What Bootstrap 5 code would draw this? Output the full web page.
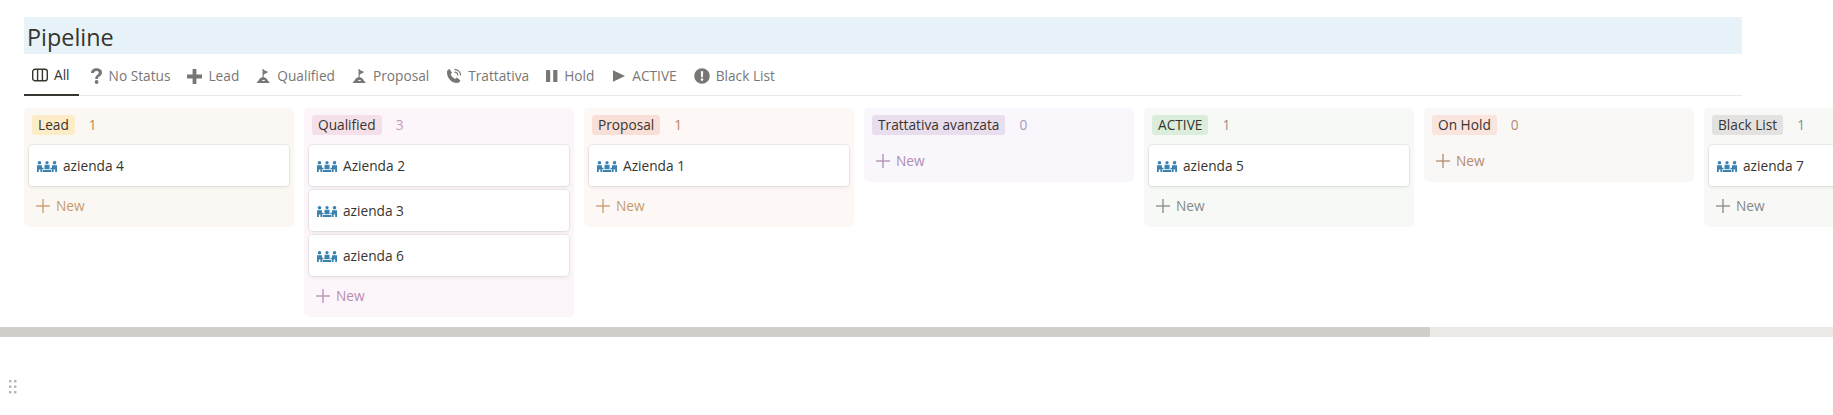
<!DOCTYPE html>
<html lang="en">

<head>
    <meta charset="UTF-8">
    <meta name="viewport" content="width=device-width, initial-scale=1.0">
    <title>Pipeline</title>
    <link href="https://cdn.jsdelivr.net/npm/bootstrap@5.3.0/dist/css/bootstrap.min.css" rel="stylesheet">
    <style>
        html, body { height: 415px; overflow: hidden; background: #fff; }
        body { font-family: "Open Sans", "Noto Sans", sans-serif; font-size: 13.7px; color: #37352f; }

        .page-wrap { padding: 17px 0 0 24px; width: 1742px; }
        .page-title { height: 37px; line-height: 37px; margin: 0; padding: 2px 0 0 3px; background: #e7f3f8; font-family: "Open Sans", sans-serif; font-size: 23.4px; font-weight: 500; color: #37352f; }

        .view-tabs { height: 42px; border-bottom: 1px solid #e9e9e7; gap: 1px; padding-top: 2px; }
        .view-tab { display: flex; align-items: center; gap: 6px; padding: 0 8px; height: 39px; margin-bottom: -1px; color: #787774; font-weight: 500; white-space: nowrap; text-decoration: none; }
        .view-tab svg { fill: #787774; flex: none; }
        .view-tab.is-active { color: #37352f; border-bottom: 2px solid #37352f; padding-right: 9px; margin-right: 2px; }
        .view-tab.is-active svg { fill: none; stroke: #37352f; }

        .board-area { overflow: hidden; padding: 12px 0 0 24px; height: 231px; gap: 10px; }
        .board-col { flex: 0 0 270px; border-radius: 5px; padding: 7px 5px 5px; }
        .col-head { height: 20px; margin: 0 0 10px 3px; display: flex; align-items: center; gap: 14px; }
        .col-pill { height: 20px; line-height: 20px; padding: 0 6px; border-radius: 3px; font-weight: 500; color: #37352f; white-space: nowrap; }
        .deal-card { height: 41px; margin-bottom: 4px; padding: 2px 8px 0; display: flex; align-items: center; gap: 6px; background: #fff; border-radius: 4px; box-shadow: 0 0 0 1px rgba(15,15,15,.06), 0 2px 4px rgba(15,15,15,.06); font-weight: 500; color: #37352f; }
        .deal-card svg { flex: none; fill: #3a82b0; }
        .col-new { height: 32px; padding-left: 7px; display: flex; align-items: center; gap: 6px; }
        .col-new svg { stroke: currentColor; stroke-width: 1.3; flex: none; }

        .scroll-track { height: 10px; background: #ebeae7; }
        .scroll-thumb { height: 10px; width: 1430px; background: #d0cfca; }

        .drag-grip { margin: 43px 0 0 9px; width: 8px; height: 14px; }
        .drag-grip svg { display: block; }

        .c-lead { background: #fbf8f3; } .c-lead .col-pill { background: #fdecc8; } .c-lead .col-num { color: #b98a5e; } .c-lead .col-new { color: #c69a6c; }
        .c-qual { background: #fcf6fa; } .c-qual .col-pill { background: #f5e0e9; } .c-qual .col-num { color: #c39abb; } .c-qual .col-new { color: #b98cb0; }
        .c-prop { background: #fdf8f5; } .c-prop .col-pill { background: #f9dfd7; } .c-prop .col-num { color: #b98a5e; } .c-prop .col-new { color: #c69a6c; }
        .c-trat { background: #f9f6fc; } .c-trat .col-pill { background: #e8deee; } .c-trat .col-num { color: #a99abf; } .c-trat .col-new { color: #b08cb4; }
        .c-act { background: #f7f9f6; } .c-act .col-pill { background: #dbeddb; } .c-act .col-num { color: #8f968f; } .c-act .col-new { color: #87898a; }
        .c-hold { background: #f9f8f7; } .c-hold .col-pill { background: #f9e4de; } .c-hold .col-num { color: #b48a70; } .c-hold .col-new { color: #b48a70; }
        .c-black { background: #f8f8f7; } .c-black .col-pill { background: #e3e2e0; } .c-black .col-num { color: #91918e; } .c-black .col-new { color: #87878a; }
    </style>
</head>

<body>

    <!-- shared icons -->
    <svg width="0" height="0" class="position-absolute">
        <defs>
            <symbol id="ic-people" viewBox="0 0 20 11">
                <circle cx="2.500" cy="1.800" r="1.800" />
                <circle cx="10" cy="1.600" r="1.600" />
                <circle cx="17.500" cy="1.800" r="1.800" />
                <path d="M0 4.200h5v2.600h1.600v1.400H5V11H3.400V8.400H1.800V11H0zM7.500 3.800h5v4.400h-5zM15 4.200H20V11h-1.800V8.400h-1.600V11H15V8.200h-1.600V6.800H15zM5.600 9h8.800v2H5.600z" />
            </symbol>
            <symbol id="ic-flag" viewBox="0 0 16 16">
                <path d="M7 0.500h1.200v1l5 2.300-5 2.600v2.800c2 .3 3 1 3.500 2.300l3 4H.6l3-4c.5-1.300 1.600-2 3.400-2.300zM6.200 12.200a1.800 1.200 0 0 0 3.600 0z" fill-rule="evenodd" />
            </symbol>
            <symbol id="ic-plus" viewBox="0 0 14 14">
                <path d="M0 7h14" fill="none" />
                <path d="M7 0v14" fill="none" />
            </symbol>
        </defs>
    </svg>

    <div class="page-wrap">
        <h1 class="page-title">Pipeline</h1>

        <nav class="view-tabs d-flex align-items-center">
            <a class="view-tab is-active" href="#">
                <svg width="16" height="14" viewBox="0 0 16 14" stroke-width="1.4"><rect x=".7" y="1.200" width="14.600" height="11.600" rx="2.400" /><path d="M5.600 1.200v11.600M10.400 1.200v11.600" /></svg>All
            </a>
            <a class="view-tab" href="#">
                <svg width="13" height="16" viewBox="0 0 13 16"><path d="M1 5c0-2.900 2.300-4.700 5.500-4.700 3.300 0 5.500 1.700 5.500 4.300 0 2-1.100 3-2.500 3.900-1.200.8-1.500 1.200-1.500 2.500H5.200c0-2.200.6-3.100 2-4.100 1-.7 1.500-1.200 1.500-2.100 0-1-.8-1.700-2.200-1.700S4.200 3.800 4.100 5z" /><circle cx="6.600" cy="14" r="1.900" /></svg>No Status
            </a>
            <a class="view-tab" href="#">
                <svg width="15" height="15" viewBox="0 0 15 15"><path d="M5.600 0h3.800v5.600H15v3.800H9.400V15H5.600V9.400H0V5.600h5.600z" /></svg>Lead
            </a>
            <a class="view-tab" href="#">
                <svg width="15" height="16"><use href="#ic-flag" /></svg>Qualified
            </a>
            <a class="view-tab" href="#">
                <svg width="15" height="16"><use href="#ic-flag" /></svg>Proposal
            </a>
            <a class="view-tab" href="#">
                <svg width="16" height="16" viewBox="0 0 16 16"><path d="M3.500 1 6 4.700 4.700 6.300c.8 2 2.300 3.600 4.400 4.600l1.600-1.300 3.700 2.600c-.3 1.600-1.600 2.800-3.300 2.800C5.500 15 1 10 1 4.200 1 2.700 2 1.300 3.500 1z" /><path d="M8.500 3.600a4 4 0 0 1 3.900 3.900h-1.100a2.900 2.900 0 0 0-2.800-2.800zM8.500 .8a6.800 6.800 0 0 1 6.700 6.700h-1.100a5.700 5.700 0 0 0-5.600-5.600z" /></svg>Trattativa
            </a>
            <a class="view-tab" href="#">
                <svg width="12" height="14" viewBox="0 0 12 14"><rect x="0" y="1" width="4.200" height="12" rx=".5" /><rect x="7.200" y="1" width="4.200" height="12" rx=".5" /></svg>Hold
            </a>
            <a class="view-tab" href="#">
                <svg width="15" height="14" viewBox="0 0 15 14"><path d="M2 1.200 14 7 2 12.800z" /></svg>ACTIVE
            </a>
            <a class="view-tab" href="#">
                <svg width="16" height="16" viewBox="0 0 16 16"><path fill-rule="evenodd" d="M8 .2a7.800 7.800 0 1 1 0 15.600A7.800 7.800 0 0 1 8 .2zM6.800 3.300l.3 6h1.800l.3-6zM8 10.300a1.300 1.300 0 1 0 0 2.600 1.300 1.300 0 0 0 0-2.600z" /></svg>Black List
            </a>
        </nav>
    </div>

    <div class="board-area d-flex align-items-start" id="board"></div>

    <div class="scroll-track">
        <div class="scroll-thumb"></div>
    </div>

    <div class="drag-grip">
        <svg width="8" height="14" viewBox="0 0 8 14" fill="#b5b4b0">
            <rect x="0" y="0" width="2.400" height="2.400" /><rect x="5" y="0" width="2.400" height="2.400" />
            <rect x="0" y="5.500" width="2.400" height="2.400" /><rect x="5" y="5.500" width="2.400" height="2.400" />
            <rect x="0" y="11" width="2.400" height="2.400" /><rect x="5" y="11" width="2.400" height="2.400" />
        </svg>
    </div>

    <script src="https://cdn.jsdelivr.net/npm/bootstrap@5.3.0/dist/js/bootstrap.bundle.min.js"></script>

    <script>
        // Pipeline columns and the companies in each
        const columns = [
            { cls: 'c-lead', name: 'Lead', cards: ['azienda 4'] },
            { cls: 'c-qual', name: 'Qualified', cards: ['Azienda 2', 'azienda 3', 'azienda 6'] },
            { cls: 'c-prop', name: 'Proposal', cards: ['Azienda 1'] },
            { cls: 'c-trat', name: 'Trattativa avanzata', cards: [] },
            { cls: 'c-act', name: 'ACTIVE', cards: ['azienda 5'] },
            { cls: 'c-hold', name: 'On Hold', cards: [] },
            { cls: 'c-black', name: 'Black List', cards: ['azienda 7'] }
        ];

        const board = document.getElementById('board');

        columns.forEach(col => {
            const cards = col.cards.map(name => `
                <div class="deal-card">
                    <svg width="20" height="11"><use href="#ic-people" /></svg>${name}
                </div>`).join('');

            board.innerHTML += `
                <section class="board-col ${col.cls}">
                    <div class="col-head">
                        <span class="col-pill">${col.name}</span>
                        <span class="col-num">${col.cards.length}</span>
                    </div>
                    ${cards}
                    <div class="col-new">
                        <svg width="14" height="14" fill="none"><use href="#ic-plus" /></svg>New
                    </div>
                </section>`;
        });
    </script>

</body>

</html>
